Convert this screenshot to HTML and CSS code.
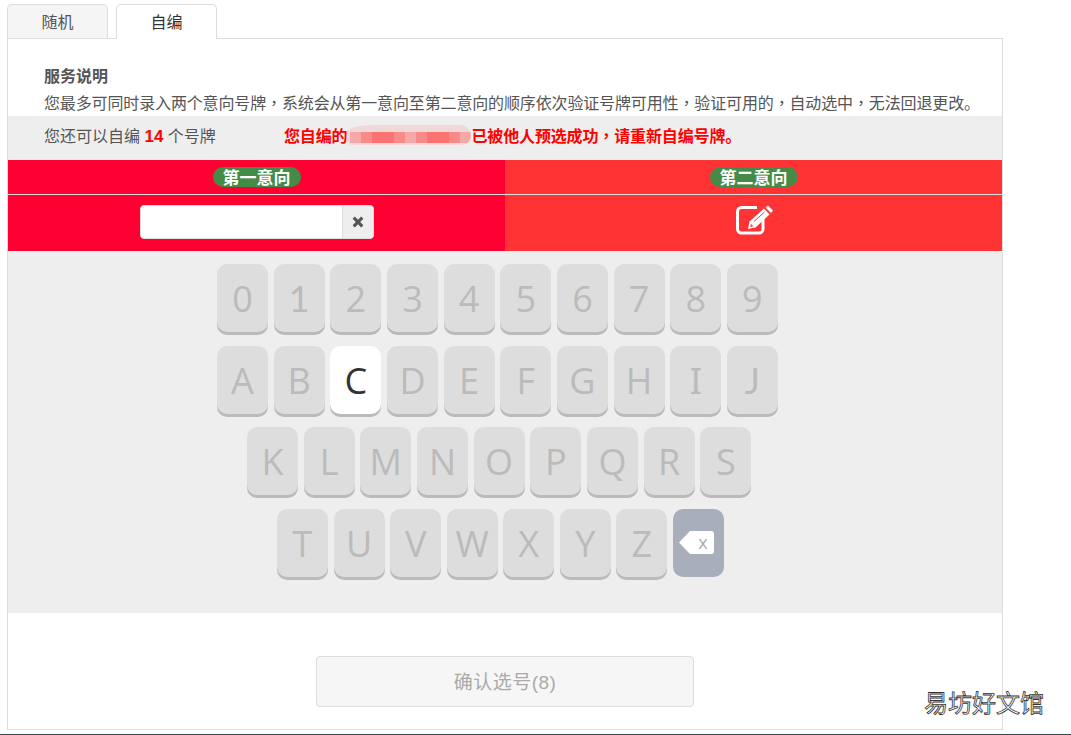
FILE: index.html
```html
<!DOCTYPE html>
<html lang="zh-CN">
<head>
<meta charset="utf-8">
<title>自编号牌</title>
<link rel="stylesheet" href="styles.css">
</head>
<body>
<div class="page">
  <div class="tabs">
    <div class="tab">随机</div>
    <div class="tab tab-active">自编</div>
  </div>
  <div class="panel">
    <div class="intro">
      <div class="intro-title">服务说明</div>
      <div class="intro-text">您最多可同时录入两个意向号牌<span class="punct" lang="zh-TW">，</span>系统会从第一意向至第二意向的顺序依次验证号牌可用性<span class="punct" lang="zh-TW">，</span>验证可用的<span class="punct" lang="zh-TW">，</span>自动选中<span class="punct" lang="zh-TW">，</span>无法回退更改。</div>
    </div>
    <div class="status">
      <div class="remain">您还可以自编 <b>14</b> 个号牌</div>
      <div class="notice"><span>您自编的</span><span class="mosaic"><i class="m1"></i><i class="m2"></i><i class="m3"></i><i class="m3"></i><i class="m2"></i><i class="m1"></i><i class="m2"></i><i class="m3"></i><i class="m3"></i><i class="m2"></i><i class="m1"></i></span><span>已被他人预选成功<span class="punct" lang="zh-TW">，</span>请重新自编号牌。</span></div>
    </div>
    <div class="choices">
      <div class="choice choice-one">
        <div class="choice-head"><span class="badge">第一意向</span></div>
        <div class="choice-body">
          <div class="plate">
            <div class="plate-input"></div>
            <div class="plate-clear">
              <svg class="clear-icon" viewBox="0 0 12 12"><path d="M.6 2.800 2.800.6 6 3.800 9.200.6 11.400 2.800 8.200 6 11.400 9.200 9.200 11.400 6 8.200 2.800 11.400.6 9.200 3.800 6Z"/></svg>
            </div>
          </div>
        </div>
      </div>
      <div class="choice choice-two">
        <div class="choice-head"><span class="badge">第二意向</span></div>
        <div class="choice-body">
          <svg class="edit-icon" viewBox="0 0 38 30">
            <path class="edit-box" d="M21 2.500H5.500a4 4 0 0 0-4 4V24a4 4 0 0 0 4 4H23a4 4 0 0 0 4-4V14"/>
            <path class="edit-pen" d="M12 24 13.500 16.500 28 3.500 33.500 9.500 19.500 22.500Z"/>
            <path class="edit-pen" d="M29.500 2.500 32 .5 37 5.500 35 8Z"/>
            <path class="edit-cut" d="M14.800 18.800 17.500 21.300 14.500 22Z"/>
            <path class="edit-cut-line" d="M18 16.500 28.500 7"/>
          </svg>
        </div>
      </div>
    </div>
    <div class="keyboard">
      <div class="keys">
        <div class="row">
          <div class="key">0</div><div class="key key-lato">1</div><div class="key">2</div><div class="key">3</div><div class="key">4</div><div class="key">5</div><div class="key">6</div><div class="key">7</div><div class="key">8</div><div class="key">9</div>
        </div>
        <div class="row">
          <div class="key">A</div><div class="key">B</div><div class="key key-on">C</div><div class="key">D</div><div class="key">E</div><div class="key">F</div><div class="key">G</div><div class="key">H</div><div class="key key-noto">I</div><div class="key key-lato">J</div>
        </div>
        <div class="row row-3">
          <div class="key">K</div><div class="key">L</div><div class="key">M</div><div class="key">N</div><div class="key">O</div><div class="key">P</div><div class="key">Q</div><div class="key">R</div><div class="key">S</div>
        </div>
        <div class="row row-4">
          <div class="key">T</div><div class="key">U</div><div class="key">V</div><div class="key">W</div><div class="key">X</div><div class="key">Y</div><div class="key">Z</div>
          <div class="key key-back">
            <svg class="back-icon" viewBox="0 0 35 23">
              <path class="back-shape" d="M0 11.500 11 0H32a3 3 0 0 1 3 3V20a3 3 0 0 1-3 3H11Z"/>
              <text class="back-x" x="24" y="18">x</text>
            </svg>
          </div>
        </div>
      </div>
    </div>
    <div class="actions">
      <div class="confirm">确认选号(8)</div>
    </div>
  </div>
</div>
<div class="watermark">易坊好文馆</div>
<div class="strip"></div>
</body>
</html>
```

FILE: styles.css
```css
html, body {
  margin: 0;
  padding: 0;
  height: 735px;
  overflow: hidden;
  background: #fff;
}
body {
  position: relative;
  font-family: "Liberation Sans", "Noto Sans CJK SC", sans-serif;
  font-size: 16px;
  color: #555;
}
.page {
  width: 996px;
  margin-left: 7px;
  padding-top: 4px;
}
.tabs {
  display: flex;
  gap: 8px;
  height: 34px;
}
.tab {
  width: 101px;
  height: 34px;
  box-sizing: border-box;
  border: 1px solid #ddd;
  border-bottom: 0;
  border-radius: 5px 5px 0 0;
  background: #f5f5f5;
  text-align: center;
  line-height: 36px;
  color: #555;
}
.tab-active {
  height: 35px;
  background: #fff;
  color: #333;
  position: relative;
  z-index: 1;
}
.panel {
  height: 692px;
  box-sizing: border-box;
  border: 1px solid #ddd;
}
.intro {
  height: 77px;
  box-sizing: border-box;
  padding: 27px 0 0 36px;
}
.intro-title {
  font-weight: bold;
  line-height: 22px;
  margin-bottom: 5px;
}
.intro-text {
  line-height: 22px;
  height: 22px;
  white-space: nowrap;
  letter-spacing: -0.14px;
}
.punct {
  font-family: "Noto Sans CJK TC", sans-serif;
  line-height: 0;
}
.status {
  height: 44px;
  box-sizing: border-box;
  background: #eee;
  display: flex;
  align-items: center;
  padding: 0 0 6px 36px;
}
.remain {
  width: 240px;
  white-space: nowrap;
}
.remain b {
  color: #f00;
  font-size: 17px;
}
.notice {
  display: flex;
  align-items: center;
  font-weight: bold;
  color: #f00;
  white-space: nowrap;
  letter-spacing: -0.14px;
}
.mosaic {
  display: flex;
  align-items: flex-end;
  justify-content: flex-end;
  width: 124px;
  height: 20px;
  box-sizing: border-box;
  padding-bottom: 2px;
  border-radius: 30px 12px 10px 6px / 8px 12px 10px 6px;
  background: #f0d8d8;
  overflow: hidden;
}
.mosaic i {
  display: block;
  width: 11px;
  height: 11px;
}
.mosaic .m1 { background: #f4a8a8; }
.mosaic .m2 { background: #f88a8a; }
.mosaic .m3 { background: #fa7272; }
.choices {
  display: flex;
}
.choice {
  flex: 1;
  color: #fff;
}
.choice-one { background: #f03; }
.choice-two { background: #f33; }
.choice-head {
  height: 35px;
  box-sizing: border-box;
  padding-top: 7px;
  border-bottom: 1px solid #ddd;
  display: flex;
  justify-content: center;
}
.badge {
  display: block;
  height: 20px;
  line-height: 23px;
  padding: 0 10px;
  border-radius: 10px;
  background: #458b48;
  font-size: 17px;
  font-weight: bold;
  color: #fff;
  overflow: hidden;
}
.choice-body {
  height: 56px;
  box-sizing: border-box;
  padding-top: 10px;
  display: flex;
  justify-content: center;
}
.plate {
  display: flex;
  width: 234px;
  height: 34px;
  box-sizing: border-box;
  border: 1px solid #ddd;
  border-radius: 4px;
  background: #fff;
  overflow: hidden;
}
.plate-input {
  flex: 1;
}
.plate-clear {
  width: 30px;
  background: #eee;
  border-left: 1px solid #ddd;
  display: flex;
  align-items: center;
  justify-content: center;
}
.clear-icon {
  width: 12px;
  height: 12px;
  fill: #555;
}
.edit-icon {
  width: 38px;
  height: 30px;
  margin: 0 0 0 2px;
}
.edit-box {
  fill: none;
  stroke: #fff;
  stroke-width: 3;
}
.edit-pen {
  fill: #fff;
}
.edit-cut {
  fill: #f33;
}
.edit-cut-line {
  fill: none;
  stroke: #f33;
  stroke-width: 1;
}
.keyboard {
  height: 362px;
  box-sizing: border-box;
  background: #eee;
  padding: 13px 0 0 209px;
}
.keys {
  width: 561px;
  display: flex;
  flex-direction: column;
  gap: 13.67px;
}
.row {
  display: flex;
  gap: 5.67px;
}
.row-3 { padding-left: 30px; }
.row-4 {
  padding-left: 60px;
  gap: 5.57px;
}
.key {
  width: 51px;
  height: 68px;
  flex: none;
  border-radius: 10px;
  background: #ddd;
  box-shadow: 0 3px 0 #bbb;
  color: #bbb;
  font-family: "Open Sans", "Liberation Sans", sans-serif;
  font-size: 36px;
  line-height: 69px;
  text-align: center;
}
.key-lato {
  font-family: "Lato", sans-serif;
}
.key-noto {
  font-family: "Noto Sans", sans-serif;
}
.key-on {
  background: #fff;
  color: #333;
}
.key-back {
  background: #a9afba;
  box-shadow: none;
  display: flex;
  align-items: center;
  justify-content: center;
  box-sizing: border-box;
  padding-right: 4px;
}
.back-icon {
  width: 35px;
  height: 23px;
}
.back-shape {
  fill: #fff;
}
.back-x {
  fill: #a9afba;
  font-family: "Open Sans", sans-serif;
  font-size: 18px;
  text-anchor: middle;
}
.actions {
  padding: 43px 0 0 308px;
}
.confirm {
  width: 378px;
  height: 51px;
  box-sizing: border-box;
  border: 1px solid #ddd;
  border-radius: 4px;
  background: #f6f6f6;
  color: #aaa;
  font-size: 19px;
  letter-spacing: 0.5px;
  line-height: 51px;
  text-align: center;
}
.watermark {
  position: absolute;
  left: 924px;
  top: 688px;
  font-size: 24px;
  line-height: 32px;
  color: #fff;
  -webkit-text-stroke: 0.8px #333;
  white-space: nowrap;
}
.strip {
  position: absolute;
  left: 0;
  right: 0;
  top: 734px;
  height: 1px;
  background: #3c4650;
}
```
